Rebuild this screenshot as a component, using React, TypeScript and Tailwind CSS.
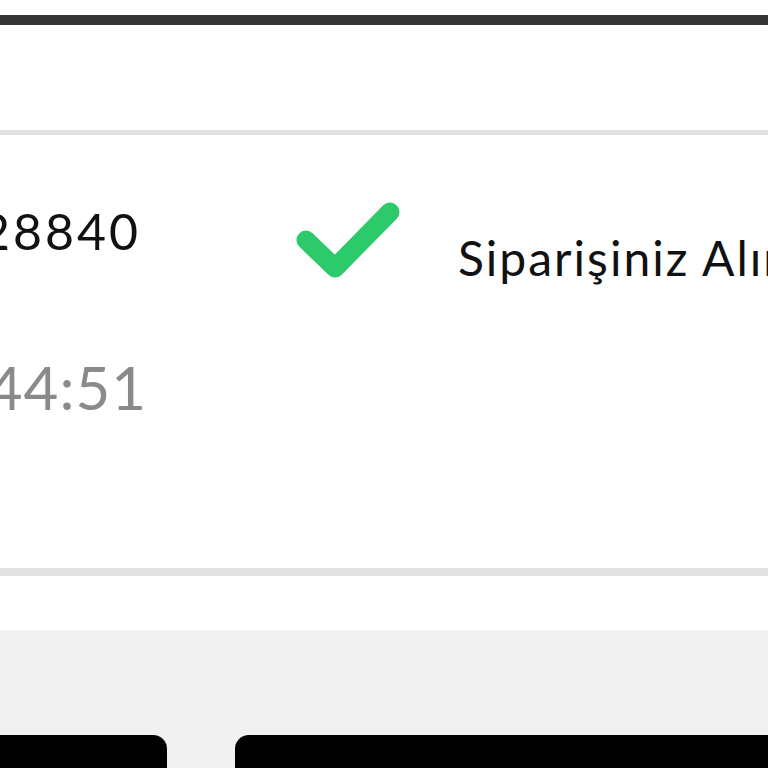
const font = { fontFamily: 'Lato, "Open Sans", sans-serif' };

function Check({ className }: { className?: string }) {
  return (
    <svg viewBox="0 0 105 78" aria-hidden="true" className={className}>
      <path
        d="M11 38 L40 66 L95 10"
        fill="none"
        stroke="#2dca6c"
        strokeWidth={19}
        strokeLinecap="round"
        strokeLinejoin="round"
      />
    </svg>
  );
}

export default function App() {
  return (
    <div
      className="flex h-[768px] w-[768px] flex-col overflow-hidden bg-white"
      style={font}
    >
      {/* üst bar */}
      <div className="h-[15px] shrink-0 bg-white" />
      <div className="h-[10px] shrink-0 bg-[#353535]" />
      <div className="h-[105px] shrink-0 bg-white" />
      <div className="h-[5px] shrink-0 bg-[#e3e3e3]" />

      {/* sipariş satırı */}
      <div className="flex h-[433px] shrink-0 items-start">
        <div className="flex w-[143px] shrink-0 flex-col items-end">
          <span className="mt-[71px] mr-[2px] whitespace-nowrap text-[50px] leading-none tracking-[3px] text-[#111]">
            28840
          </span>
          <span className="mt-[101px] -mr-[4px] whitespace-nowrap text-[60px] leading-none tracking-[1px] text-[#8a8a8a]">
            44:51
          </span>
        </div>
        <Check className="ml-[152px] mt-[67px] h-[78px] w-[105px] shrink-0" />
        <span className="ml-[58px] mt-[99px] whitespace-nowrap text-[48px] leading-none tracking-[2px] text-[#111]">
          Siparişiniz Alındı
        </span>
      </div>

      <div className="h-[8px] shrink-0 bg-[#e1e1e1]" />
      <div className="h-[54px] shrink-0 bg-white" />

      {/* alt butonlar */}
      <div className="flex flex-1 gap-[68px] bg-[#f1f1f1] pt-[105px]">
        <button className="-ml-[100px] h-[80px] w-[267px] shrink-0 rounded-[14px] bg-black" />
        <button className="-mr-[100px] h-[80px] flex-1 rounded-[14px] bg-black" />
      </div>
    </div>
  );
}
